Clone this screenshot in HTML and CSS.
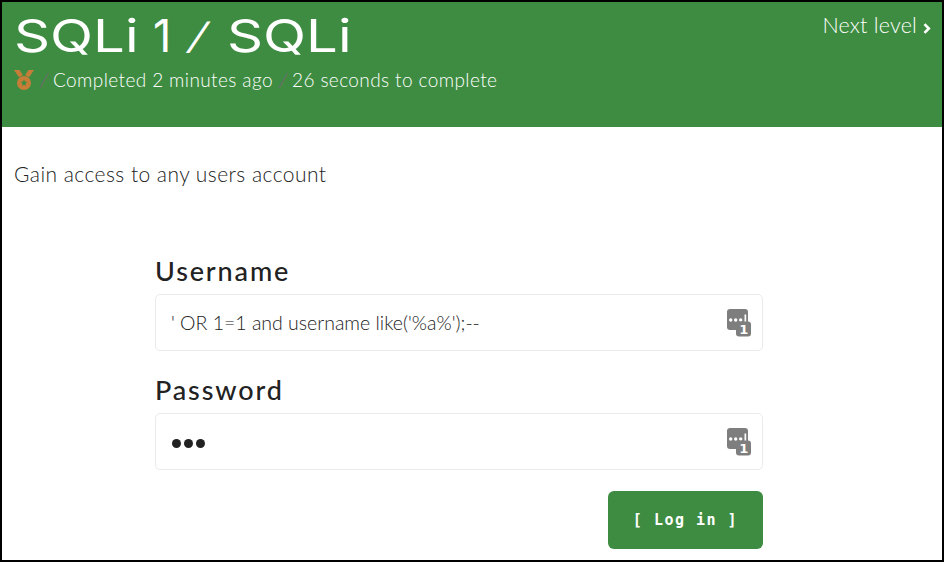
FILE: index.html
```
<!DOCTYPE html>
<html lang="en">
<head>
<meta charset="utf-8">
<title>SQLi 1 / SQLi</title>
<link rel="stylesheet" href="styles.css">
</head>
<body>
<div class="page">
  <header class="header">
    <div class="summary">
      <h1 class="title"><span class="word"><span>SQLi</span></span><span class="one">1</span><span class="slash">/</span><span class="word"><span>SQLi</span></span></h1>
      <div class="meta">
        <svg class="medal" width="20" height="20" viewBox="0 0 20 20" aria-hidden="true">
          <path d="M0 0h5.500l3.300 5-3.800 2.200zM20 0h-5.500l-3.300 5 3.800 2.200z" fill="currentColor"/>
          <path fill="currentColor" fill-rule="evenodd" d="M10 6a7 7 0 1 1 0 14a7 7 0 0 1 0-14zM10 9.500l-1 2.100-2.300.3 1.700 1.600-.4 2.300L10 14.700l2 1.100-.4-2.300 1.700-1.600-2.300-.3z"/>
        </svg>
        <span class="separator">/</span>
        <span class="completed">Completed 2 minutes ago</span>
        <span class="separator">/</span>
        <span>26 seconds to complete</span>
      </div>
    </div>
    <a class="next">Next level<svg width="8" height="11" viewBox="0 0 8 11" aria-hidden="true"><path d="M1.500 1.200l4.300 4.300-4.300 4.300" fill="none" stroke="currentColor" stroke-width="2.600"/></svg></a>
  </header>
  <main class="content">
    <p class="task">Gain access to any users account</p>
    <form class="login">
      <label class="label">Username</label>
      <div class="field">
        <span class="value">' OR 1=1 and username like('%a%');--</span>
        <svg class="manager" width="25" height="28" viewBox="0 0 25 28" aria-hidden="true">
          <rect x="0" y="0" width="21" height="21" rx="3"/>
          <g class="mark"><circle cx="3.700" cy="11" r="1.700"/><circle cx="8.700" cy="11" r="1.700"/><circle cx="13.700" cy="11" r="1.700"/><rect x="17.500" y="5.500" width="1.700" height="8"/></g>
          <rect x="9" y="12.500" width="15" height="15" rx="3"/>
          <text x="16.800" y="24.800">1</text>
        </svg>
      </div>
      <label class="label second-label">Password</label>
      <div class="field">
        <span class="dots"><i></i><i></i><i></i></span>
        <svg class="manager" width="25" height="28" viewBox="0 0 25 28" aria-hidden="true">
          <rect x="0" y="0" width="21" height="21" rx="3"/>
          <g class="mark"><circle cx="3.700" cy="11" r="1.700"/><circle cx="8.700" cy="11" r="1.700"/><circle cx="13.700" cy="11" r="1.700"/><rect x="17.500" y="5.500" width="1.700" height="8"/></g>
          <rect x="9" y="12.500" width="15" height="15" rx="3"/>
          <text x="16.800" y="24.800">1</text>
        </svg>
      </div>
      <button class="submit" type="button">[ Log in ]</button>
    </form>
  </main>
</div>
</body>
</html>
```
FILE: styles.css
```
* { box-sizing: border-box; }
body { margin: 0; background: #fff; color: #222; font-family: Lato, sans-serif; font-weight: 300; }
.page { width: 944px; height: 562px; border: 2px solid #000; overflow: hidden; }
.header { display: flex; justify-content: space-between; height: 125px; padding: 9px 11px 0 12px; background: #3e8c41; color: #fff; }
.title { display: flex; margin: 0; height: 50px; font: 400 45px/50px Inter, sans-serif; white-space: pre; }
.word { width: 124px; }
.word span, .one, .slash { display: inline-block; transform-origin: left; }
.word span { transform: scaleX(1.250); }
.one { width: 49px; padding-left: 15px; }
.slash { width: 40px; padding-left: 5px; font-size: 36px; font-weight: 500; transform: skewX(-22deg); }
.meta { display: flex; align-items: center; height: 24px; margin-top: 7px; font-size: 19px; line-height: 24px; letter-spacing: .4px; white-space: nowrap; }
.medal { color: #c77d37; }
.separator { width: 7px; margin: 0 6px; color: #667066; font-weight: 400; transform: skewX(-8deg); }
.completed { width: 220px; }
.next { display: flex; align-items: center; gap: 6px; height: 28px; font-size: 21.500px; line-height: 28px; letter-spacing: .2px; white-space: nowrap; }
.next svg { margin-top: 7px; }
.content { padding: 33px 12px 0; }
.task { margin: 0; font-size: 21px; line-height: 28px; letter-spacing: .450px; }
.login { display: flex; flex-direction: column; width: 608px; margin: 66px 0 0 141px; }
.label { height: 40px; font-size: 27px; line-height: 34px; font-weight: 500; letter-spacing: 1.850px; }
.second-label { margin-top: 22px; }
.field { display: flex; justify-content: space-between; align-items: center; height: 57px; padding: 0 10px 0 15px; border: 1px solid #ebebeb; border-radius: 5px; }
.value { font-size: 19.500px; line-height: 24px; white-space: nowrap; }
.manager { fill: #7e7e7e; }
.mark, .manager text { fill: #fff; }
.manager text { font: 700 13px "DejaVu Sans", sans-serif; text-anchor: middle; }
.dots { display: flex; gap: 3px; padding: 3px 0 0 1px; }
.dots i { width: 9px; height: 9px; border-radius: 50%; background: #222; }
.submit { align-self: flex-end; width: 155px; height: 58px; margin-top: 21px; padding: 0; border: 0; border-radius: 6px; background: #3e8c41; color: #fff; font: 700 15px/20px "DejaVu Sans Mono", monospace; letter-spacing: 1.500px; }
```
